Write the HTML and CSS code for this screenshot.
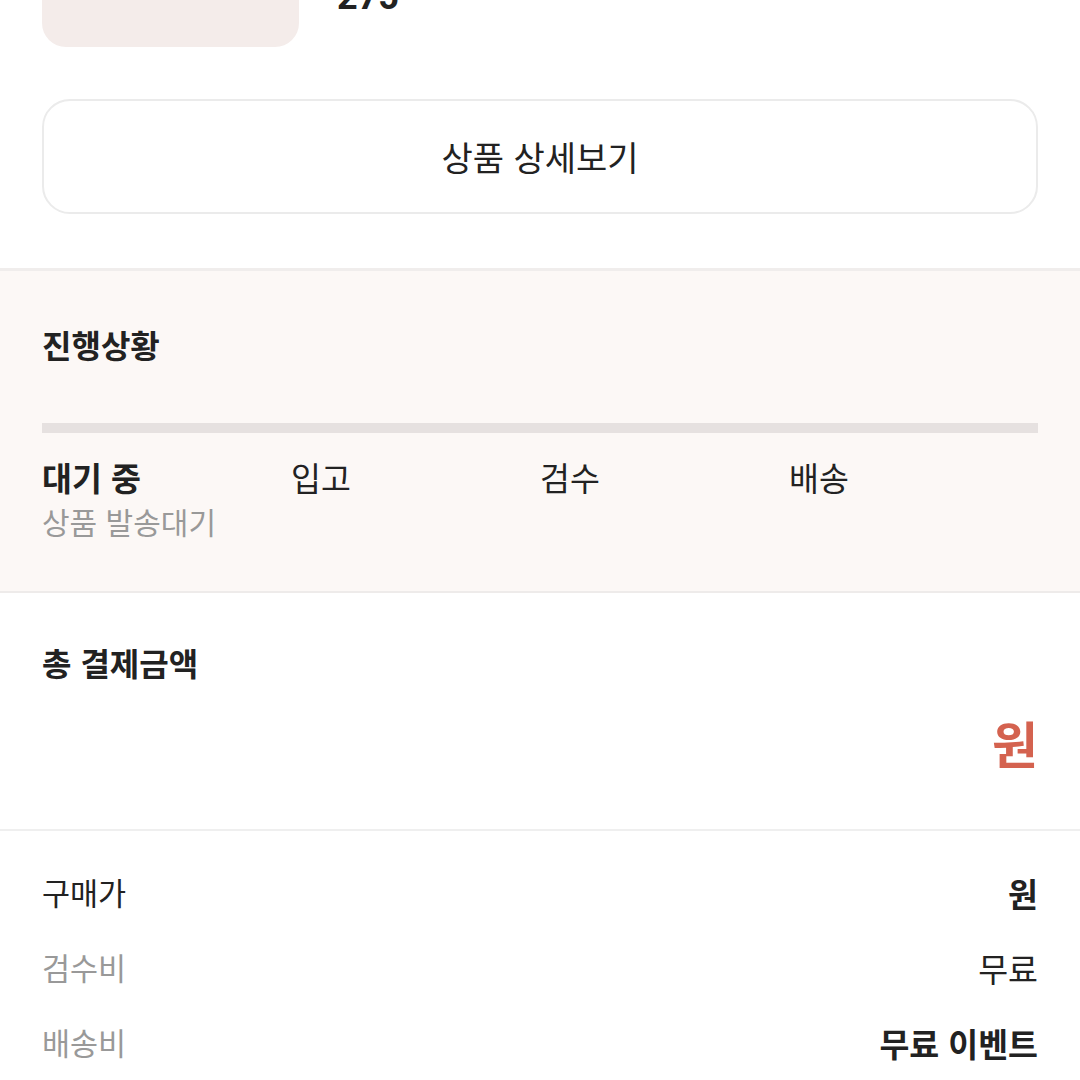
FILE: index.html
```html
<!DOCTYPE html>
<html lang="ko">
<head>
<meta charset="utf-8">
<title>주문 상세</title>
<link rel="stylesheet" href="styles.css">
</head>
<body>
<div class="page">
  <section class="product">
    <div class="thumb"></div>
    <div class="info">
      <div class="size">275</div>
    </div>
  </section>

  <section class="detail-btn-wrap">
    <button class="detail-btn">상품 상세보기</button>
  </section>

  <section class="progress">
    <h2 class="sec-title">진행상황</h2>
    <div class="bar"></div>
    <div class="steps">
      <div class="step">
        <div class="step-name active">대기 중</div>
        <div class="step-sub">상품 발송대기</div>
      </div>
      <div class="step"><div class="step-name">입고</div></div>
      <div class="step"><div class="step-name">검수</div></div>
      <div class="step"><div class="step-name">배송</div></div>
    </div>
  </section>

  <section class="total">
    <h2 class="sec-title">총 결제금액</h2>
    <div class="total-amount">원</div>
  </section>

  <section class="rows">
    <div class="row">
      <span class="label dark">구매가</span>
      <span class="value bold">원</span>
    </div>
    <div class="row">
      <span class="label">검수비</span>
      <span class="value">무료</span>
    </div>
    <div class="row">
      <span class="label">배송비</span>
      <span class="value bold">무료 이벤트</span>
    </div>
  </section>
</div>
</body>
</html>
```

FILE: styles.css
```css
* { box-sizing: border-box; }

html, body {
  margin: 0;
  padding: 0;
  background: #ffffff;
}

body {
  font-family: "Noto Sans CJK KR", "Noto Sans", sans-serif;
  color: #222222;
  width: 1080px;
  overflow: hidden;
}

.page {
  width: 1080px;
}

/* product */
.product {
  display: flex;
  gap: 38px;
  padding: 0 42px;
  margin-top: -153px;
}

.thumb {
  width: 257px;
  height: 200px;
  border-radius: 24px;
  background: #f4ecea;
  flex: none;
}

.info {
  display: flex;
  flex-direction: column;
  justify-content: flex-end;
  padding-bottom: 30px;
}

.size {
  font-family: "Roboto", "Noto Sans", sans-serif;
  font-weight: 700;
  font-size: 36px;
  line-height: 40px;
  color: #222;
}

/* detail button */
.detail-btn-wrap {
  padding: 52px 42px 54px;
  border-bottom: 3px solid #f0edec;
}

.detail-btn {
  display: flex;
  align-items: center;
  justify-content: center;
  width: 100%;
  height: 115px;
  background: #ffffff;
  border: 2px solid #ebebeb;
  border-radius: 28px;
  font-family: "Noto Sans CJK KR", "Noto Sans", sans-serif;
  font-size: 34px;
  color: #222;
  padding: 0;
}

/* progress */
.progress {
  background: #fcf8f6;
  padding: 52px 42px 48px;
  border-bottom: 2px solid #eeebea;
}

.sec-title {
  margin: 0;
  font-size: 32px;
  line-height: 42px;
  font-weight: 700;
  color: #222;
}

.bar {
  margin-top: 58px;
  height: 10px;
  background: #e6e1e0;
}

.steps {
  margin-top: 22px;
  display: grid;
  grid-template-columns: repeat(4, 1fr);
}

.step-name {
  font-size: 32.5px;
  line-height: 44px;
  color: #222;
}

.step-name.active {
  font-weight: 700;
}

.step-sub {
  font-size: 30px;
  line-height: 44px;
  color: #999999;
}

/* total */
.total {
  padding: 48px 42px 57px;
  border-bottom: 2px solid #efefef;
}

.total-amount {
  margin-top: 29px;
  text-align: right;
  font-size: 50px;
  line-height: 60px;
  font-weight: 700;
  color: #d4624f;
}

/* rows */
.rows {
  padding: 24px 42px 0;
}

.row {
  display: flex;
  justify-content: space-between;
  align-items: center;
  height: 75px;
  line-height: 75px;
}

.label {
  font-size: 30.5px;
  color: #999999;
}

.label.dark {
  color: #222;
}

.value {
  font-size: 32.5px;
  color: #222;
}

.value.bold {
  font-weight: 700;
}
```
